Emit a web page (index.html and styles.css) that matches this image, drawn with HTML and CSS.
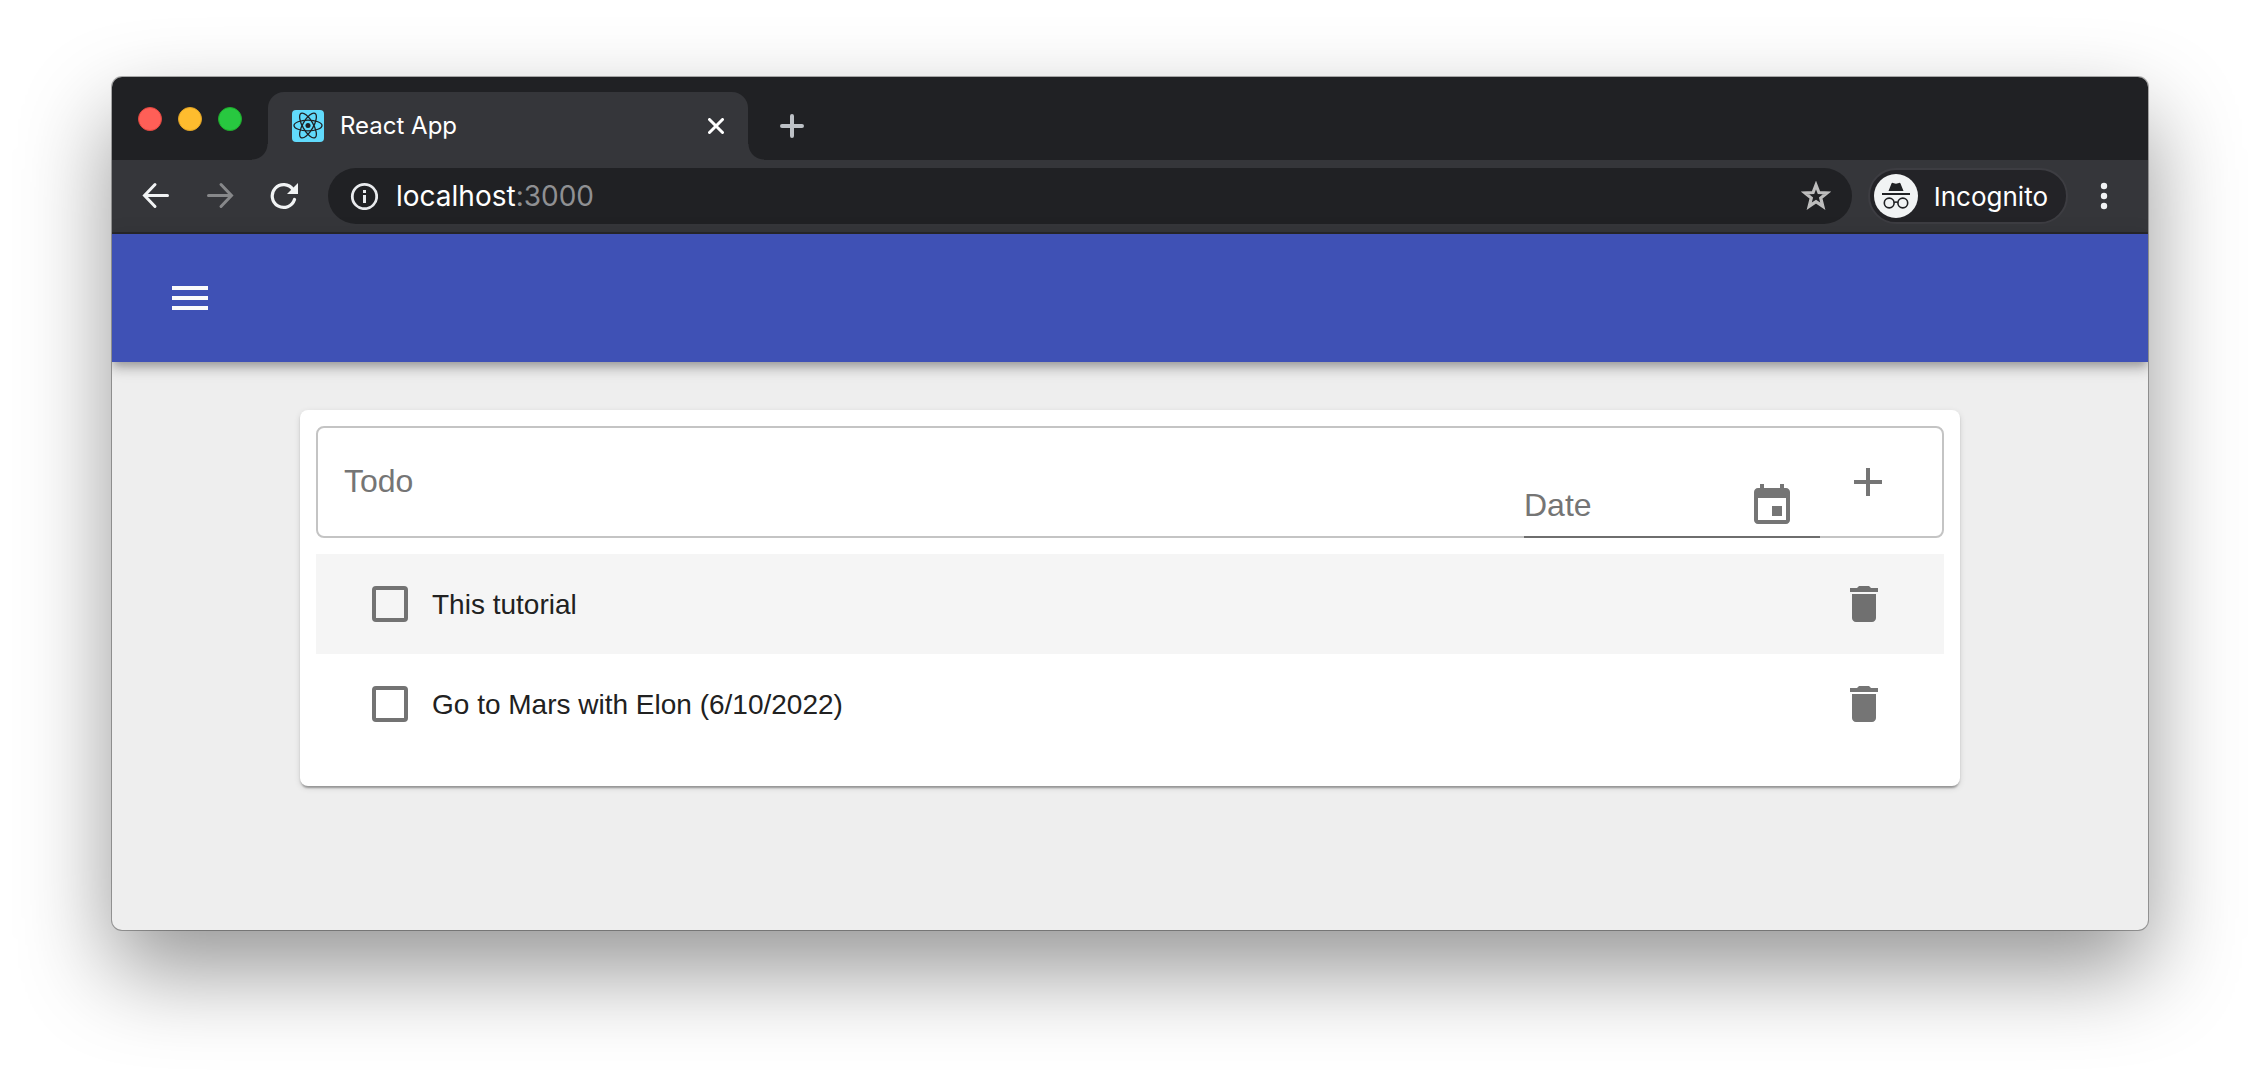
FILE: index.html
```html
<!DOCTYPE html>
<html lang="en">
<head>
<meta charset="utf-8">
<title>React App</title>
<link rel="stylesheet" href="styles.css">
</head>
<body>
<div class="window">
  <header class="tabstrip">
    <div class="lights">
      <button class="light light-close" aria-label="Close window"></button>
      <button class="light light-min" aria-label="Minimize window"></button>
      <button class="light light-max" aria-label="Zoom window"></button>
    </div>
    <div class="tab">
      <svg class="favicon" viewBox="0 0 32 32" aria-hidden="true">
        <rect width="32" height="32" rx="4" fill="#61dafb"/>
        <g fill="none" stroke="#202124" stroke-width="1.300">
          <ellipse cx="16" cy="15.500" rx="14" ry="5.300"/>
          <ellipse cx="16" cy="15.500" rx="14" ry="5.300" transform="rotate(60 16 15.500)"/>
          <ellipse cx="16" cy="15.500" rx="14" ry="5.300" transform="rotate(120 16 15.500)"/>
        </g>
        <circle cx="16" cy="15.500" r="2.500" fill="#202124"/>
      </svg>
      <span class="tab-title">React App</span>
      <button class="plain" aria-label="Close tab">
        <svg width="16" height="16" viewBox="0 0 16 16"><path d="M1.500 1.500l13 13M14.500 1.500l-13 13" stroke="#fff" stroke-width="3" stroke-linecap="round"/></svg>
      </button>
    </div>
    <button class="plain new-tab" aria-label="New tab">
      <svg width="24" height="24" viewBox="0 0 24 24"><path d="M12 2v20M2 12h20" stroke="#bdc1c6" stroke-width="4" stroke-linecap="round"/></svg>
    </button>
  </header>

  <nav class="toolbar">
    <div class="nav-buttons">
      <button class="plain" aria-label="Back">
        <svg width="28" height="28" viewBox="0 0 28 28" fill="none" stroke="#f1f3f4" stroke-width="3" stroke-linecap="round"><path d="M25.500 13.500H3M13 2.500L2.500 13.500l10.500 11"/></svg>
      </button>
      <button class="plain" aria-label="Forward">
        <svg width="28" height="28" viewBox="0 0 28 28" fill="none" stroke="#87888a" stroke-width="3" stroke-linecap="round"><path d="M2.500 13.500H25M15 2.500l10.500 11-10.500 11"/></svg>
      </button>
      <button class="plain" aria-label="Reload">
        <svg width="28" height="28" viewBox="0 0 28 28"><path d="M23 7.500A11.400 11.400 0 1 0 24.500 17.500" fill="none" stroke="#f1f3f4" stroke-width="3.200" stroke-linecap="round"/><path d="M28 1v11H17z" fill="#f1f3f4"/></svg>
      </button>
    </div>
    <div class="omnibox">
      <svg width="28" height="28" viewBox="0 0 28 28" aria-hidden="true"><circle cx="14.500" cy="14.500" r="12.200" fill="none" stroke="#e8eaed" stroke-width="2.800"/><path d="M13 13h3v8h-3zM13 8h3v3h-3z" fill="#e8eaed"/></svg>
      <div class="url" role="textbox" contenteditable="true" spellcheck="false" aria-label="Address">localhost<span class="port">:3000</span></div>
      <button class="plain" aria-label="Bookmark this page">
        <svg width="30" height="30" viewBox="0 0 30 30"><path d="M15 4l2.900 7.500 8.100.4-6.300 5.100 2.100 8.200L15 20.600l-6.800 4.600 2.100-8.200L4 11.900l8.100-.4z" fill="none" stroke="#bdbdbd" stroke-width="3.200"/></svg>
      </button>
    </div>
    <button class="incognito">
      <svg width="44" height="44" viewBox="0 0 44 44" aria-hidden="true">
        <circle cx="22" cy="22" r="22" fill="#f1f3f4"/>
        <path d="M14.500 17l3-7.500q.4-1 1.500-.6l3 .8 3-.8q1.100-.4 1.500.6l3 7.500zM8 19h28v2H8z" fill="#202124"/>
        <g fill="none" stroke="#202124" stroke-width="1.600"><circle cx="15.200" cy="29" r="4.900"/><circle cx="28.800" cy="29" r="4.900"/><path d="M20 28.600q2-1.200 4 0"/></g>
      </svg>
      Incognito
    </button>
    <button class="plain" aria-label="Menu">
      <svg width="8" height="28" viewBox="0 0 8 28" fill="#f1f3f4"><circle cx="4" cy="4" r="3.200"/><circle cx="4" cy="14" r="3.200"/><circle cx="4" cy="24" r="3.200"/></svg>
    </button>
  </nav>

  <div class="appbar">
    <button class="plain" aria-label="Open navigation">
      <svg width="48" height="48" viewBox="0 0 24 24" fill="#fafafa"><path d="M3 18h18v-2H3v2zm0-5h18v-2H3v2zm0-7v2h18V6H3z"/></svg>
    </button>
  </div>

  <main class="page">
    <section class="card">
      <form class="entry">
        <input class="todo-input" type="text" placeholder="Todo" aria-label="Todo">
        <div class="date-field">
          <input class="date-input" type="text" placeholder="Date" aria-label="Date">
          <button class="plain" type="button" aria-label="Choose date">
            <svg width="48" height="48" viewBox="0 0 24 24" fill="#757575"><path d="M17 12h-5v5h5v-5zM16 1v2H8V1H6v2H5c-1.110 0-1.990.9-1.990 2L3 19c0 1.100.89 2 2 2h14c1.100 0 2-.9 2-2V5c0-1.100-.9-2-2-2h-1V1h-2zm3 18H5V8h14v11z"/></svg>
          </button>
        </div>
        <button class="plain" type="button" aria-label="Add todo">
          <svg width="48" height="48" viewBox="0 0 24 24" fill="#757575"><path d="M19 13h-6v6h-2v-6H5v-2h6V5h2v6h6v2z"/></svg>
        </button>
      </form>
      <ul class="todos">
        <li class="todo todo-active">
          <input class="check" type="checkbox" id="todo-1">
          <label class="todo-label" for="todo-1">This tutorial</label>
          <button class="plain" aria-label="Delete This tutorial">
            <svg width="48" height="48" viewBox="0 0 24 24" fill="#707070"><path d="M6 19c0 1.100.9 2 2 2h8c1.100 0 2-.9 2-2V7H6v12zM19 4h-3.500l-1-1h-5l-1 1H5v2h14V4z"/></svg>
          </button>
        </li>
        <li class="todo">
          <input class="check" type="checkbox" id="todo-2">
          <label class="todo-label" for="todo-2">Go to Mars with Elon (6/10/2022)</label>
          <button class="plain" aria-label="Delete Go to Mars with Elon">
            <svg width="48" height="48" viewBox="0 0 24 24" fill="#757575"><path d="M6 19c0 1.100.9 2 2 2h8c1.100 0 2-.9 2-2V7H6v12zM19 4h-3.500l-1-1h-5l-1 1H5v2h14V4z"/></svg>
          </button>
        </li>
      </ul>
    </section>
  </main>
</div>
</body>
</html>
```
FILE: styles.css
```css
* {
  box-sizing: border-box;
}

body {
  display: flex;
  min-height: 100vh;
  margin: 0;
  padding: 77px 112px 148px;
  background: #fff;
  font-family: "Liberation Sans", Arial, sans-serif;
}

button,
input {
  font: inherit;
}

svg {
  display: block;
}

.plain {
  flex: none;
  padding: 0;
  border: 0;
  background: none;
}

.window {
  display: flex;
  flex: 1;
  flex-direction: column;
  min-width: 0;
  overflow: hidden;
  border-radius: 10px;
  background: #eee;
  box-shadow: 0 0 0 1px rgba(0, 0, 0, 0.3), 0 40px 90px rgba(0, 0, 0, 0.42);
}

/* Tab strip */
.tabstrip {
  display: flex;
  align-items: flex-end;
  height: 83px;
  background: #202124;
  font-family: Inter, sans-serif;
}

.lights {
  display: flex;
  gap: 16px;
  width: 156px;
  padding: 0 0 29px 26px;
}

.light {
  width: 24px;
  height: 24px;
  padding: 0;
  border: 1px solid #e2463f;
  border-radius: 50%;
  background: #ff5f57;
}

.light-min {
  border-color: #e1a325;
  background: #febc2e;
}

.light-max {
  border-color: #1eab2c;
  background: #28c840;
}

.tab {
  position: relative;
  display: flex;
  align-items: center;
  gap: 16px;
  width: 480px;
  height: 68px;
  padding: 0 24px;
  border-radius: 16px 16px 0 0;
  background: #35363a;
  color: #fff;
}

/* Curved feet where the tab meets the toolbar */
.tab::before,
.tab::after {
  content: "";
  position: absolute;
  bottom: 0;
  width: 16px;
  height: 16px;
}

.tab::before {
  right: 100%;
  background: radial-gradient(circle at 0 0, #202124 15px, #35363a 16px);
}

.tab::after {
  left: 100%;
  background: radial-gradient(circle at 100% 0, #202124 15px, #35363a 16px);
}

.favicon {
  width: 32px;
  height: 32px;
}

.tab-title {
  flex: 1;
  font-size: 24px;
  line-height: 32px;
}

.new-tab {
  margin: 0 32px 22px;
}

/* Toolbar */
.toolbar {
  display: flex;
  align-items: center;
  height: 74px;
  padding: 0 40px 0 30px;
  border-bottom: 2px solid #29292c;
  background: #35363a;
  color: #fff;
  font-family: Inter, sans-serif;
}

.nav-buttons {
  display: flex;
  gap: 36px;
  width: 186px;
}

.omnibox {
  display: flex;
  flex: 1;
  align-items: center;
  gap: 18px;
  height: 56px;
  padding: 0 21px 0 22px;
  border-radius: 28px;
  background: #202124;
}

.url {
  flex: 1;
  font-size: 28px;
  line-height: 36px;
}

.port {
  color: #8f9093;
}

.incognito {
  display: flex;
  align-items: center;
  gap: 16px;
  height: 56px;
  margin: 0 32px 0 16px;
  padding: 0 18px 0 4px;
  border: 2px solid #3d3d42;
  border-radius: 28px;
  background: #232327;
  color: #fff;
  font-size: 26px;
}

/* App */
.appbar {
  display: flex;
  flex: none;
  align-items: center;
  height: 128px;
  padding: 0 54px;
  background: #3f51b5;
  box-shadow: 0 4px 8px -2px rgba(0, 0, 0, 0.2), 0 8px 10px rgba(0, 0, 0, 0.14), 0 2px 20px rgba(0, 0, 0, 0.12);
}

.page {
  padding: 48px 188px;
}

.card {
  padding: 16px 16px 32px;
  border-radius: 8px;
  background: #fff;
  box-shadow: 0 4px 2px -2px rgba(0, 0, 0, 0.2), 0 2px 2px rgba(0, 0, 0, 0.14), 0 2px 6px rgba(0, 0, 0, 0.12);
}

.entry {
  display: flex;
  align-items: center;
  height: 112px;
  padding-right: 50px;
  border: 2px solid #c4c4c4;
  border-radius: 8px;
  color: #212121;
  font-size: 32px;
}

.entry input {
  min-width: 0;
  border: 0;
  outline: 0;
  background: none;
  color: inherit;
}

.entry input::placeholder {
  color: #757575;
  opacity: 1;
}

.todo-input {
  flex: 1;
  align-self: stretch;
  padding: 0 26px 2px;
}

/* The date underline runs over the bottom border of the entry box */
.date-field {
  display: flex;
  align-self: flex-end;
  align-items: center;
  width: 296px;
  height: 62px;
  margin: 0 24px -2px 0;
  padding-right: 24px;
  border-bottom: 2px solid #6e6e6e;
}

.date-input {
  flex: 1;
  padding: 0 0 2px;
}

.todos {
  margin: 16px 0 0;
  padding: 0;
  list-style: none;
}

.todo {
  display: flex;
  align-items: center;
  gap: 24px;
  height: 100px;
  padding: 0 56px;
  color: #212121;
  font-size: 28px;
}

.todo-active {
  background: #f5f5f5;
}

.check {
  appearance: none;
  width: 36px;
  height: 36px;
  margin: 0;
  border: 4px solid #737373;
  border-radius: 4px;
}

.check:checked {
  background: #3f51b5;
}

.todo-label {
  flex: 1;
  padding-top: 2px;
}
```
